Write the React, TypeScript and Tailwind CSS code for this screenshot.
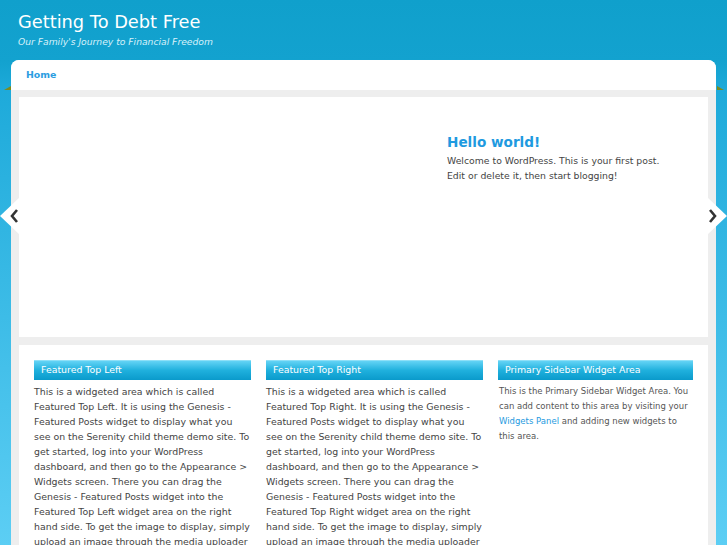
import React from "react";

const font = { fontFamily: '"DejaVu Sans", Verdana, sans-serif' };

const WidgetTitle = ({ children }: { children: React.ReactNode }) => (
  <h4 className="h-[20px] flex items-center pl-[7px] text-[9.4px] text-white font-normal bg-[linear-gradient(to_bottom,#63d3f5,#1fb0dd_50%,#0a9acb)] border-t border-[#8ee0f8]">
    {children}
  </h4>
);

const featuredText = (name: string) =>
  `This is a widgeted area which is called Featured Top ${name}. It is using the Genesis - Featured Posts widget to display what you see on the Serenity child theme demo site. To get started, log into your WordPress dashboard, and then go to the Appearance > Widgets screen. There you can drag the Genesis - Featured Posts widget into the Featured Top ${name} widget area on the right hand side. To get the image to display, simply upload an image through the media uploader on the edit post screen and publish your post.`;

const Arrow = ({ dir }: { dir: "left" | "right" }) => (
  <svg width="20" height="40" viewBox="0 0 20 40" className="block">
    {dir === "left" ? (
      <>
        <polygon points="20,1 0,20 20,39" fill="#ffffff" />
        <path d="M17 14 L12 20 L17 26" stroke="#333" strokeWidth="2.6" fill="none" />
      </>
    ) : (
      <>
        <polygon points="0,1 20,20 0,39" fill="#ffffff" />
        <path d="M3 14 L8 20 L3 26" stroke="#333" strokeWidth="2.6" fill="none" />
      </>
    )}
  </svg>
);

export default function App() {
  return (
    <div
      style={font}
      className="min-h-[545px] h-[545px] overflow-hidden relative bg-[linear-gradient(to_bottom,#10a0cc_0px,#13a2cf_62px,#1eaada_90px,#5ccef4_545px)]"
    >
      <header className="h-[60px] pl-[18px] pt-[10px]">
        <h1 className="text-[17.8px] leading-[23px] text-white font-normal">Getting To Debt Free</h1>
        <p className="text-[9.2px] leading-[13px] italic text-[#d8f1fa] mt-[2px]">
          Our Family's Journey to Financial Freedom
        </p>
      </header>

      {/* ribbon tips */}
      <div className="absolute left-[4px] top-[86px] w-0 h-0 border-l-[7px] border-l-transparent border-b-[4px] border-b-[#7d8b1f]" />
      <div className="absolute right-[3px] top-[86px] w-0 h-0 border-r-[7px] border-r-transparent border-b-[4px] border-b-[#7d8b1f]" />

      <div className="mx-[11px] bg-[#eeeeee] rounded-t-[8px] overflow-hidden">
        <nav className="h-[30px] bg-white flex items-center pl-[15px]">
          <a className="text-[9.4px] font-bold text-[#2b9de1]">Home</a>
        </nav>
        <div className="px-[8px] pt-[7px]">
          <div className="h-[240px] bg-white flex">
            <div className="w-[428px]" />
            <div className="pt-[36px]">
              <h2 className="text-[13.6px] leading-[19px] font-bold text-[#1e9ae0]">Hello world!</h2>
              <p className="text-[9.3px] leading-[15px] text-[#444] mt-[1px]">
                Welcome to WordPress. This is your first post.
                <br />
                Edit or delete it, then start blogging!
              </p>
            </div>
          </div>
          <div className="mt-[8px] bg-white px-[15px] pt-[15px] h-[300px] flex gap-[15px]">
            <div className="w-[217px]">
              <WidgetTitle>Featured Top Left</WidgetTitle>
              <p className="text-[9.4px] leading-[15px] text-[#444] mt-[4px]">{featuredText("Left")}</p>
            </div>
            <div className="w-[217px]">
              <WidgetTitle>Featured Top Right</WidgetTitle>
              <p className="text-[9.4px] leading-[15px] text-[#444] mt-[4px]">{featuredText("Right")}</p>
            </div>
            <div className="w-[195px]">
              <WidgetTitle>Primary Sidebar Widget Area</WidgetTitle>
              <p className="text-[8.5px] leading-[15px] text-[#555] mt-[4px] pl-[1px]">
                This is the Primary Sidebar Widget Area. You can add content to this area by visiting your{" "}
                <a className="text-[#1e9ae0]">Widgets Panel</a> and adding new widgets to this area.
              </p>
            </div>
          </div>
        </div>
      </div>

      <div className="absolute left-0 top-[196px]">
        <Arrow dir="left" />
      </div>
      <div className="absolute right-0 top-[196px]">
        <Arrow dir="right" />
      </div>
    </div>
  );
}
